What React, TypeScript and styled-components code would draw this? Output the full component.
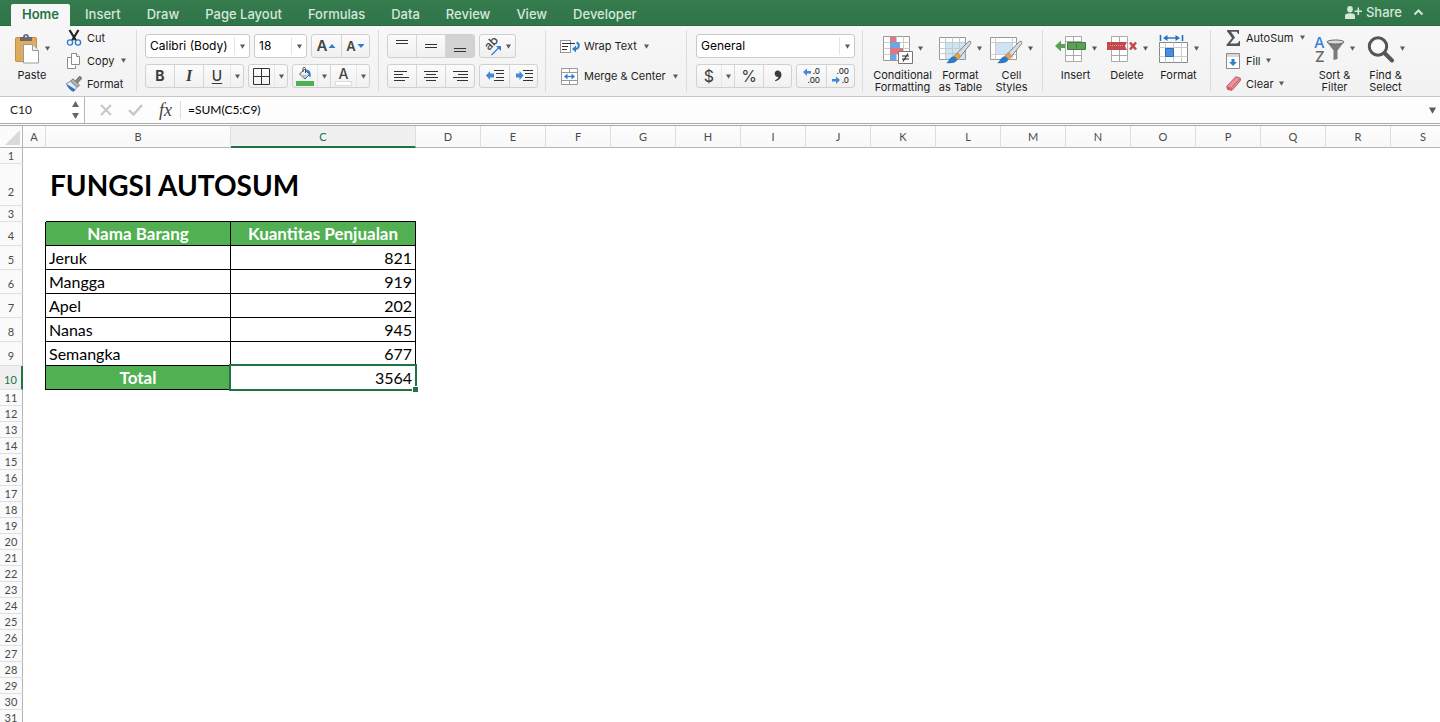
import React from "react";
import styled, { createGlobalStyle, css } from "styled-components";

const UI = `Inter, "Liberation Sans", sans-serif`;
const SHEET = `Lato, "Open Sans", sans-serif`;
const GREEN = "#217346";
const INK = "#1d1d1d";
const BLUE = "#2f7fd1";

const GlobalStyle = createGlobalStyle`
  *, *::before, *::after { box-sizing: border-box; }
  body { margin: 0; background: #fff; font-family: ${UI}; color: ${INK}; }
  button, input, select { font: inherit; color: inherit; margin: 0; padding: 0; border: 0; background: none; outline: none; }
  svg { display: block; flex: none; overflow: visible; }
`;

const Window = styled.div`
  display: flex;
  flex-direction: column;
  height: 100vh;
  overflow: hidden;
`;

/* ---------- tab strip ---------- */

const TitleBar = styled.header`
  display: flex;
  align-items: flex-end;
  justify-content: space-between;
  flex: none;
  height: 26px;
  padding: 0 16px 0 11px;
  background: linear-gradient(#347b4e, #307549);
  border-bottom: 1px solid #2a6a41;
`;

const Tabs = styled.nav`
  display: flex;
  gap: 4px;
  margin-bottom: -1px;
`;

const Tab = styled.button<{ $active?: boolean }>`
  height: 22px;
  padding: 0 11px 2px;
  border-radius: 2px 2px 0 0;
  font-size: 13px;
  line-height: 20px;
  font-weight: ${(p) => (p.$active ? 600 : 500)};
  color: ${(p) => (p.$active ? GREEN : "#d3e8da")};
  background: ${(p) => (p.$active ? "#f6f6f6" : "transparent")};
  white-space: nowrap;
`;

const ShareArea = styled.div`
  display: flex;
  align-items: center;
  gap: 11px;
  height: 26px;
  color: #d3e8da;
`;

const ShareButton = styled.button`
  display: flex;
  align-items: center;
  gap: 4px;
  font-size: 13px;
  line-height: 24px;
  font-weight: 500;
`;

const IconButton = styled.button`
  display: grid;
  place-items: center;
`;

/* ---------- ribbon ---------- */

const Ribbon = styled.div`
  display: flex;
  flex: none;
  height: 71px;
  background: linear-gradient(#f7f7f7, #f2f2f2);
  border-bottom: 1px solid #c6c6c6;
  overflow: hidden;
`;

const Group = styled.section<{ $left?: number; $right?: number }>`
  display: flex;
  flex: none;
  padding: 0 ${(p) => p.$right ?? 8}px 0 ${(p) => p.$left ?? 8}px;
  position: relative;
  &:not(:last-child)::after {
    content: "";
    position: absolute;
    right: 0;
    top: 4px;
    bottom: 4px;
    width: 1px;
    background: #dcdcdc;
  }
`;

const TwoRows = styled.div<{ $width?: number }>`
  display: flex;
  flex-direction: column;
  gap: 6px;
  padding-top: 8px;
  width: ${(p) => (p.$width ? `${p.$width}px` : "auto")};
`;

const ControlRow = styled.div`
  display: flex;
  gap: 4px;
`;

const ThreeRows = styled.div<{ $width: number; $left?: number }>`
  display: flex;
  flex-direction: column;
  align-items: flex-start;
  padding-left: ${(p) => p.$left ?? 0}px;
  width: ${(p) => p.$width}px;
`;

const RowButton = styled.button<{ $tall?: boolean }>`
  display: flex;
  align-items: center;
  gap: ${(p) => (p.$tall ? 4 : 5)}px;
  height: ${(p) => (p.$tall ? 24 : 23)}px;
  font-size: 11px;
  line-height: 14px;
  white-space: nowrap;
`;

const ArrowSlot = styled.span<{ $gap: number }>`
  padding-left: ${(p) => p.$gap}px;
`;

const BigButton = styled.button<{ $width: number }>`
  display: flex;
  flex-direction: column;
  align-items: center;
  justify-content: flex-start;
  width: ${(p) => p.$width}px;
  padding-top: 7px;
  font-size: 11px;
  line-height: 12px;
  white-space: pre-line;
  text-align: center;
`;

const BigIcon = styled.span`
  display: flex;
  align-items: flex-end;
  gap: 5px;
  height: 31px;
  margin-bottom: 5px;
  > svg:last-child { align-self: center; }
`;

const Segments = styled.div`
  display: flex;
  height: 24px;
  border: 1px solid #d0d0d0;
  border-radius: 3px;
  background: linear-gradient(#fbfbfb, #f0f0f0);
`;

const Segment = styled.button<{ $w: number; $pressed?: boolean; $plain?: boolean }>`
  display: flex;
  align-items: center;
  justify-content: center;
  gap: 4px;
  width: ${(p) => p.$w}px;
  font-size: 16px;
  line-height: 20px;
  color: #3c3c3c;
  border-left: 1px solid ${(p) => (p.$plain ? "#e6e6e6" : "#d6d6d6")};
  &:first-child { border-left: 0; }
  ${(p) =>
    p.$pressed &&
    css`
      background: #d2d2d2;
      border-radius: 0 2px 2px 0;
    `}
`;

const Combo = styled.label<{ $w: number }>`
  display: flex;
  align-items: center;
  width: ${(p) => p.$w}px;
  height: 24px;
  border: 1px solid #c9c9c9;
  border-radius: 3px;
  background: #fff;
`;

const ComboSelect = styled.select`
  flex: 1;
  min-width: 0;
  height: 20px;
  padding-left: 4px;
  appearance: none;
  font-size: 12px;
  line-height: 20px;
  color: #000;
`;

const ComboArrow = styled.span`
  display: grid;
  place-items: center;
  width: 15px;
  height: 18px;
  border-left: 1px solid #e4e4e4;
`;

const SizeLabel = styled.span<{ $up?: boolean }>`
  display: flex;
  align-items: center;
  gap: 1px;
  font-size: ${(p) => (p.$up ? 15 : 13)}px;
  line-height: 20px;
  font-weight: 600;
  color: #444;
`;

const ColorLabel = styled.span`
  display: flex;
  flex-direction: column;
  align-items: center;
  font-size: 14px;
  line-height: 15px;
  font-weight: 500;
  color: #444;
  &::after {
    content: "";
    width: 17px;
    height: 5px;
    background: #fff;
    border: 1px solid #ddd;
  }
`;

const Bold = styled.b`
  font-weight: 700;
  font-size: 14px;
`;

const Italic = styled.i`
  font-family: "Liberation Serif", serif;
  font-weight: 700;
  font-size: 16px;
`;

const Underlined = styled.span`
  font-size: 14px;
  font-weight: 500;
  text-decoration: underline;
  text-underline-offset: 2px;
`;

/* ---------- formula bar ---------- */

const FormulaBar = styled.div`
  display: flex;
  align-items: stretch;
  flex: none;
  height: 27px;
  background: #fdfdfd;
  border-bottom: 1px solid #a9a9a9;
`;

const NameBox = styled.div`
  display: flex;
  align-items: center;
  width: 85px;
  padding: 0 4px 0 10px;
  border-right: 1px solid #b5b5b5;
  background: #fff;
`;

const NameInput = styled.input`
  flex: 1;
  min-width: 0;
  font-family: ${SHEET};
  font-size: 12px;
  line-height: 16px;
`;

const FormulaTools = styled.div`
  display: flex;
  align-items: center;
  gap: 16px;
  width: 96px;
  margin: 4px 0;
  padding-left: 15px;
  border-right: 1px solid #dcdcdc;
`;

const FxButton = styled.button`
  font-family: "Liberation Serif", serif;
  font-style: italic;
  font-size: 18px;
  line-height: 18px;
  color: #444;
`;

const FormulaInput = styled.input`
  flex: 1;
  min-width: 0;
  padding-left: 7px;
  font-family: ${SHEET};
  font-size: 12px;
  line-height: 16px;
  color: #000;
`;

const ExpandButton = styled(IconButton)`
  width: 16px;
`;

/* ---------- sheet ---------- */

const SheetArea = styled.main`
  flex: 1;
  min-height: 0;
  overflow: hidden;
  margin-top: 1px;
  border-top: 1px solid #a9a9a9;
  background: #fff;
`;

const Grid = styled.table`
  table-layout: fixed;
  width: 0;
  border-collapse: separate;
  border-spacing: 0;
  font-family: ${SHEET};
`;

const Col = styled.col<{ $w: number }>`
  width: ${(p) => p.$w}px;
`;

const Corner = styled.td`
  height: 22px;
  padding: 0 2px 2px 0;
  border-right: 1px solid #b5b5b5;
  border-bottom: 1px solid #b5b5b5;
  background: #fbfbfb;
  vertical-align: bottom;
  svg { margin-left: auto; }
`;

const ColHead = styled.th<{ $on?: boolean }>`
  height: 22px;
  padding: ${(p) => (p.$on ? 1 : 0)}px 0 0;
  font-size: 11px;
  line-height: 14px;
  font-weight: 400;
  color: ${(p) => (p.$on ? GREEN : "#4a4a4a")};
  background: ${(p) => (p.$on ? "#f0f0f0" : "linear-gradient(#fdfdfd, #f8f8f8)")};
  border-right: 1px solid #dedede;
  border-bottom: ${(p) => (p.$on ? `2px solid ${GREEN}` : "1px solid #b5b5b5")};
`;

const Row = styled.tr<{ $h: number }>`
  height: ${(p) => p.$h}px;
`;

const RowHead = styled.th<{ $on?: boolean; $lift: number }>`
  padding: 0 0 ${(p) => p.$lift}px;
  font-size: 11px;
  line-height: 14px;
  font-weight: 400;
  vertical-align: bottom;
  color: ${(p) => (p.$on ? GREEN : "#4a4a4a")};
  background: ${(p) => (p.$on ? "#f0f0f0" : "#fafafa")};
  border-bottom: 1px solid #e0e0e0;
  border-right: ${(p) => (p.$on ? `2px solid ${GREEN}` : "1px solid #b5b5b5")};
`;

const Blank = styled.td`
  padding: 0;
`;

const LeadCell = styled(Blank)<{ $ruled?: boolean; $under?: boolean }>`
  border-right: ${(p) => (p.$ruled ? "1px solid #000" : "0")};
  border-bottom: ${(p) => (p.$under ? "1px solid #000" : "0")};
`;

const Title = styled.td`
  padding: 0 0 4px 4px;
  font-size: 28px;
  line-height: 34px;
  font-weight: 700;
  color: #000;
  vertical-align: bottom;
  white-space: nowrap;
`;

const Cell = styled.td<{ $fill?: boolean; $num?: boolean }>`
  position: relative;
  height: 24px;
  padding: 0 3px;
  font-size: ${(p) => (p.$fill ? 17 : 16)}px;
  line-height: 22px;
  color: ${(p) => (p.$fill ? "#fff" : "#000")};
  font-weight: ${(p) => (p.$fill ? 700 : 400)};
  text-align: ${(p) => (p.$fill ? "center" : p.$num ? "right" : "left")};
  background: ${(p) => (p.$fill ? "#50b052" : "#fff")};
  border-right: 1px solid #000;
  border-bottom: 1px solid #000;
`;

const Selection = styled.span`
  position: absolute;
  inset: -2px;
  border: 2px solid ${GREEN};
  &::after {
    content: "";
    position: absolute;
    right: -3px;
    bottom: -3px;
    width: 6px;
    height: 6px;
    background: ${GREEN};
    border: solid #fff;
    border-width: 1px 0 0 1px;
  }
`;

/* ---------- icons ---------- */

const Down = ({ s = 5, c = "#5a5a5a" }: { s?: number; c?: string }) => (
  <svg width={s} height={s} viewBox="0 0 5 5" aria-hidden="true">
    <path d="M0 .4h5L2.5 4.8z" fill={c} />
  </svg>
);

const PasteIcon = () => (
  <svg width="25" height="30" viewBox="0 0 25 30" aria-hidden="true">
    <rect x=".5" y="3.500" width="21" height="24" rx="1" fill="#e0aa5f" stroke="#c18f48" />
    <path d="M5 3h3c0-4 6-4 6 0h3v4H5z" fill="#6a6a6a" />
    <circle cx="11" cy="2.600" r="1" fill="#e8e8e8" />
    <path d="M8.500 10.500h9l6 6v12.500h-15z" fill="#fff" stroke="#9a9a9a" />
    <path d="M17.500 10.500v6h6" fill="#eee" stroke="#9a9a9a" />
  </svg>
);
const CutIcon = () => (
  <svg width="16" height="16" viewBox="0 0 16 16" aria-hidden="true">
    <path d="M3.500 0 10 10.500M12.500 0 6 10.500" stroke="#222" strokeWidth="2.200" fill="none" />
    <circle cx="4" cy="12.500" r="2.600" fill="none" stroke={BLUE} strokeWidth="1.400" />
    <circle cx="12" cy="12.500" r="2.600" fill="none" stroke={BLUE} strokeWidth="1.400" />
  </svg>
);
const CopyIcon = () => (
  <svg width="16" height="16" viewBox="0 0 16 16" fill="#fff" stroke="#8d8d8d" aria-hidden="true">
    <path d="M5.500 4.500h-4v11h8v-3" />
    <path d="M5.500.5h5l3 3v8h-8z" />
    <path d="M10.500.5v3h3" />
  </svg>
);
const BrushIcon = () => (
  <svg width="16" height="16" viewBox="0 0 16 16" aria-hidden="true">
    <path d="M9.500 5 13 .8c1.200-.8 3 .8 2.200 2.200L11.500 7z" fill="#8c8c8c" stroke="#555" strokeWidth=".8" />
    <path d="M7 2.800 13.500 9 11 11.500 4.500 5.200z" fill="#b4b4b4" stroke="#666" strokeWidth=".8" />
    <path d="M4.500 5.200 11 11.500 7.500 15.500C4.500 14 2 11.500.3 7.500z" fill="#e4edf6" stroke="#777" strokeWidth=".8" />
    <path d="M.5 8c2.500 1.500 6 3 8.800 5.800L7.500 15.500C4.500 14.500 2 12 .5 8z" fill="#2d74c4" />
  </svg>
);
const BordersIcon = () => (
  <svg width="17" height="17" viewBox="0 0 17 17" aria-hidden="true">
    <path d="M.5.5h16v16H.5zM8.500.5v16M.5 8.500h16" fill="none" stroke="#333" />
  </svg>
);
const FillIcon = () => (
  <svg width="18" height="19" viewBox="0 0 18 19" aria-hidden="true">
    <path d="m3.500 7 5-4.500 5 5-4.500 4.500z" fill="#f4f4f4" stroke="#555" />
    <path d="M7 5V1.500c0-1.500 2.500-1.500 2.500 0V6" fill="none" stroke="#444" />
    <path d="M9.500 2.500c4 0 6 2.500 5 8-2-1-2-3-3-5.500z" fill={BLUE} />
    <path d="m4 7.500 8 .2-3.200 3.500z" fill="#a9c9ea" />
    <rect y="14" width="18" height="5" fill="#4fb052" />
  </svg>
);
const SizeArrow = ({ up }: { up?: boolean }) => (
  <svg width="8" height="4" viewBox="0 0 8 4" aria-hidden="true">
    <path d={up ? "M.5 4h7L4 0z" : "M.5 0h7L4 4z"} fill={BLUE} />
  </svg>
);
const Lines = ({ d }: { d: string }) => (
  <svg width="16" height="14" viewBox="0 0 16 14" aria-hidden="true">
    <path d={d} stroke="#333" fill="none" />
  </svg>
);
const OrientIcon = () => (
  <svg width="18" height="19" viewBox="0 0 18 19" aria-hidden="true">
    <text x="5" y="14" fontSize="12" fontWeight="500" fill="#444" fontFamily={UI} transform="rotate(-45 5 14)">ab</text>
    <path d="m7.500 18 8-8" stroke={BLUE} strokeWidth="1.300" />
    <path d="M12 9h5v5z" fill={BLUE} />
  </svg>
);
const IndentIcon = ({ inc }: { inc?: boolean }) => (
  <svg width="18" height="12" viewBox="0 0 18 12" aria-hidden="true">
    <path d="M8 .5h10M10 3.500h8M10 7.500h8M8 10.500h10" stroke="#333" />
    <path d={inc ? "M8.500 5.500 4.500 1v2.500H1v4h3.500V10z" : "M0 5.500 4 1v2.500h4v4H4V10z"} fill="#3f8ad8" />
  </svg>
);
const WrapIcon = () => (
  <svg width="20" height="14" viewBox="0 0 20 14" aria-hidden="true">
    <rect x=".5" y="1.500" width="10" height="12" fill="#fff" stroke="#999" />
    <path d="M2 4.500h13M2 7.500h6M2 10.500h5" stroke="#333" />
    <path d="M16.500 3.500c3.500 1 3 6.500-1.500 6.500" fill="none" stroke={BLUE} strokeWidth="2" />
    <path d="M16 6.500v7L12 10z" fill={BLUE} />
  </svg>
);
const MergeIcon = () => (
  <svg width="20" height="17" viewBox="0 0 20 17" aria-hidden="true">
    <path d="M1.500.5h16v16h-16zM1.500 4.500h16M1.500 12.500h16M9.500.5v4M9.500 12.500v4" fill="#fff" stroke="#999" />
    <path d="M6 8.500h7" stroke={BLUE} strokeWidth="1.200" />
    <path d="M4 8.500 7.500 5.500v6zM15 8.500 11.500 5.500v6z" fill={BLUE} />
  </svg>
);
const CommaIcon = () => (
  <svg width="8" height="12" viewBox="0 0 8 12" aria-hidden="true">
    <path d="M3.300.5C6 .5 7.500 2.300 7.500 4.800c0 3-2.500 5.500-6 6.400L1 10.300c2-.8 3.200-2 3.500-3.500C2.500 7.300.7 6 .7 3.700.7 1.800 1.800.5 3.300.5z" fill="#3c3c3c" />
  </svg>
);
const DecimalIcon = ({ dec }: { dec?: boolean }) => (
  <svg width="20" height="16" viewBox="0 0 20 16" aria-hidden="true">
    <g fontSize="8" fontWeight="500" fill="#333" fontFamily={UI} textAnchor="end">
      <text x="18" y="6">{dec ? ".00" : ".0"}</text>
      <text x="18" y="15">{dec ? ".0" : ".00"}</text>
    </g>
    <path d={dec ? "M9 12 5 8.500V11H1v2.500h4V16z" : "M1 4l4-3.500V3h4v2.500H5V8z"} fill="#3f8ad8" />
  </svg>
);
const PaintBrush = () => (
  <g>
    <path d="M31.500 5.500c.8.800.3 2-.5 3L21 21l-3.500-3L28 7c1-1 2.700-2.300 3.500-1.500z" fill="#dcdcdc" stroke="#777" strokeWidth=".9" />
    <path d="M17 17.500c2-1 5 1.500 4 4l-3 2.500-4-3z" fill="#dba55a" stroke="#b98238" strokeWidth=".7" />
    <path d="M14 20.500c2-.5 4.500 1.500 4 4-2 3-7 3-11 2.500 3-1 3-5.500 7-6.500z" fill="#3079c6" />
  </g>
);
const CondIcon = () => (
  <svg width="30" height="28" viewBox="0 0 30 28" aria-hidden="true">
    <path d="M.5.500h26v24H.5z" fill="#fff" stroke="#999" />
    <path d="M.5 6.500h26M.5 12.500h26M.5 18.500h26M20.500.5v24M13.500.5v24" stroke="#ccc" />
    <path d="M7 1h6v5H7zM7 12h13v6H7z" fill="#e07880" />
    <path d="M7 6h10v6H7zM7 18h6v6H7z" fill="#6fa6e2" />
    <path d="M15.500 15.500h14v12h-14z" fill="#fff" stroke="#777" />
    <path d="M19 20h7M19 23h7M25 17.500l-5 8" stroke="#222" strokeWidth="1.100" />
  </svg>
);
const TableIcon = () => (
  <svg width="33" height="28" viewBox="0 0 33 28" aria-hidden="true">
    <path d="M.5 1.500h26v22H.5z" fill="#fff" stroke="#999" />
    <path d="M7 7h19v16H7z" fill="#cfe3f6" />
    <path d="M.5 6.500h26M.5 12.500h26M.5 17.500h26M6.500 1.500v22M13.500 1.500v22M20.500 1.500v22" stroke="#bfcfc8" />
    <PaintBrush />
  </svg>
);
const StylesIcon = () => (
  <svg width="33" height="28" viewBox="0 0 33 28" aria-hidden="true">
    <path d="M.5 1.500h26v22H.5z" fill="#fff" stroke="#999" />
    <path d="M.5 6.500h26M.5 18.500h26M5.500 1.500v22M22.500 1.500v22" stroke="#ccc" />
    <path d="M6 7h16v11H6z" fill="#cfe3f6" />
    <PaintBrush />
  </svg>
);
const InsertIcon = () => (
  <svg width="32" height="28" viewBox="0 0 32 28" aria-hidden="true">
    <path d="M10.500.5h16v25h-16zM10.500 19.500h16M18.500.5v25M10.500 5.500h16" fill="#fff" stroke="#aaa" />
    <path d="M12.500 6.500h18v7h-18z" fill="#5c9f56" stroke="#3f7d3b" />
    <path d="M21.500 8v4" stroke="#3f7d3b" />
    <path d="M0 10 6 4.500V8h4v4H6v3.500z" fill="#5c9f56" />
  </svg>
);
const DeleteIcon = () => (
  <svg width="31" height="28" viewBox="0 0 31 28" aria-hidden="true">
    <path d="M4.500.5h16v25h-16zM4.500 19.500h16M12.500.5v25" fill="#fff" stroke="#aaa" />
    <path d="M0 6h20l-2 4 2 4H0z" fill="#c4494f" />
    <path d="M3 9.500h14" stroke="#e79a9d" strokeDasharray="1 1" />
    <path d="m23 6.500 6 7M29 6.500l-6 7" stroke="#c4494f" strokeWidth="2.600" />
  </svg>
);
const FormatIcon = () => (
  <svg width="30" height="29" viewBox="0 0 30 29" aria-hidden="true">
    <path d="M1.500 0v6M23.500 0v6" stroke="#2471bd" strokeWidth="1.600" />
    <path d="M7 3h11" stroke="#2471bd" strokeWidth="1.400" />
    <path d="M4 3 8.500 0v6zM21 3l-4.500-3v6z" fill="#2471bd" />
    <path d="M.5 7.500h28v20H.5z" fill="#fff" stroke="#888" />
    <path d="M.5 12.500h28M.5 21.500h28M6.500 7.500v20M14.500 7.500v20M22.500 7.500v20" stroke="#ccc" />
    <path d="M6.500 13.500h8v8h-8z" fill="#4a90dc" stroke="#2a6db8" />
  </svg>
);
const SigmaIcon = () => (
  <svg width="15" height="16" viewBox="0 0 15 16" aria-hidden="true">
    <path d="M1 0h12v4h-1c-.4-1.700-1-2.300-2.500-2.300H5L9 7.500l-5 6h6c1.700 0 2.400-.7 3-2.500h1V16H.5v-1.200L6 8 1 1.200z" fill="#555" />
  </svg>
);
const FillDownIcon = () => (
  <svg width="15" height="16" viewBox="0 0 15 16" aria-hidden="true">
    <path d="M.5.500h13v15H.5z" fill="#fff" stroke="#8a8a8a" />
    <path d="M1 1h12v3H1z" fill="#d8d8d8" />
    <path d="M5.500 6h3v3H11l-4 4-4-4h2.500z" fill="#2f7fd1" />
  </svg>
);
const EraserIcon = () => (
  <svg width="15" height="15" viewBox="0 0 15 15" aria-hidden="true">
    <path d="m.7 10.500 9-9.800 4.600 1.500v2.500L6 14.300l-4.500-.8z" fill="#e9929b" stroke="#b34a55" strokeWidth=".9" />
    <path d="m1 10.300 4.800 1.400L6 14.300l-4.500-.8z" fill="#d0606c" />
    <path d="m5.800 11.500 8.400-9" stroke="#b34a55" strokeWidth=".7" />
  </svg>
);
const SortIcon = () => (
  <svg width="31" height="28" viewBox="0 0 31 28" aria-hidden="true">
    <g fontSize="15" fontFamily={UI} fontWeight="500">
      <text x="0" y="12" fill="#3483dc">A</text>
      <text x="1" y="26" fill="#666">Z</text>
    </g>
    <path d="M13 6h17l-6.500 8.500V23L19.500 24v-9.500z" fill="#7b7b7b" />
    <ellipse cx="21.500" cy="6" rx="8.500" ry="2" fill="#ddd" stroke="#666" />
  </svg>
);
const FindIcon = () => (
  <svg width="28" height="28" viewBox="0 0 28 28" aria-hidden="true">
    <circle cx="11" cy="10.500" r="8.700" fill="#fafafa" stroke="#555" strokeWidth="3" />
    <path d="m17.500 17 7.500 7.500" stroke="#555" strokeWidth="4" strokeLinecap="round" />
  </svg>
);
const PersonIcon = () => (
  <svg width="17" height="13" viewBox="0 0 17 13" fill="currentColor" aria-hidden="true">
    <ellipse cx="5" cy="3.300" rx="2.800" ry="3.200" />
    <path d="M0 13V9.500C0 8 2 7.300 5 7.300s5 .7 5 2.200V13z" />
    <path d="M12.500 1.500h1.600v3h2.900v1.600h-2.900v3h-1.600v-3H9.600V4.500h2.900z" />
  </svg>
);

/* ---------- building blocks ---------- */

const Picker = ({ w, label, value }: { w: number; label: string; value: string }) => (
  <Combo $w={w}>
    <ComboSelect aria-label={label} defaultValue={value}>
      <option>{value}</option>
    </ComboSelect>
    <ComboArrow><Down /></ComboArrow>
  </Combo>
);

const Big = ({ w, icon, label }: { w: number; icon: React.ReactNode; label: string }) => (
  <BigButton $width={w}>
    <BigIcon>{icon}<Down /></BigIcon>
    {label}
  </BigButton>
);

const Item = ({ icon, label, arrow, tall }: { icon: React.ReactNode; label: string; arrow?: number; tall?: boolean }) => (
  <RowButton $tall={tall}>
    {icon}
    {label}
    {arrow !== undefined && <ArrowSlot $gap={arrow}><Down /></ArrowSlot>}
  </RowButton>
);

/* ---------- data ---------- */

const TABS = ["Home", "Insert", "Draw", "Page Layout", "Formulas", "Data", "Review", "View", "Developer"];
const COLUMNS = "ABCDEFGHIJKLMNOPQRS".split("");
const colWidth = (c: string) => (c === "A" ? 23 : c === "B" || c === "C" ? 185 : 65);
const ITEMS: Record<number, [string, number]> = {
  5: ["Jeruk", 821],
  6: ["Mangga", 919],
  7: ["Apel", 202],
  8: ["Nanas", 945],
  9: ["Semangka", 677],
};
const TOTAL = Object.values(ITEMS).reduce((sum, [, n]) => sum + n, 0);
const rowHeight = (r: number) => (r === 2 ? 42 : r >= 4 && r <= 10 ? 24 : 16);
const labelLift = (h: number) => (h === 42 ? 6 : h === 24 ? 2 : 0);
const ROWS = Array.from({ length: 31 }, (_, i) => i + 1);

const rowCells = (r: number) => {
  if (r === 2) return <><Blank /><Title colSpan={18}>FUNGSI AUTOSUM</Title></>;
  if (r === 3) return <><Blank /><LeadCell $under /><LeadCell $under /></>;
  if (r === 4)
    return <><LeadCell $ruled /><Cell $fill>Nama Barang</Cell><Cell $fill>Kuantitas Penjualan</Cell></>;
  if (ITEMS[r])
    return <><LeadCell $ruled /><Cell>{ITEMS[r][0]}</Cell><Cell $num>{ITEMS[r][1]}</Cell></>;
  if (r === 10)
    return <><LeadCell $ruled /><Cell $fill>Total</Cell><Cell $num>{TOTAL}<Selection /></Cell></>;
  return <Blank colSpan={19} />;
};

export default function App() {
  return (
    <Window>
      <GlobalStyle />
      <TitleBar>
        <Tabs>
          {TABS.map((t, i) => <Tab key={t} $active={i === 0}>{t}</Tab>)}
        </Tabs>
        <ShareArea>
          <ShareButton><PersonIcon />Share</ShareButton>
          <IconButton aria-label="Collapse ribbon">
            <svg width="11" height="7" viewBox="0 0 11 7" aria-hidden="true">
              <path d="m1.500 5.500 4-4 4 4" fill="none" stroke="currentColor" strokeWidth="2" />
            </svg>
          </IconButton>
        </ShareArea>
      </TitleBar>

      <Ribbon>
        <Group $right={0}>
          <Big w={48} icon={<PasteIcon />} label="Paste" />
          <ThreeRows $width={81} $left={10}>
            <Item icon={<CutIcon />} label="Cut" />
            <Item icon={<CopyIcon />} label="Copy" arrow={2} />
            <Item icon={<BrushIcon />} label="Format" />
          </ThreeRows>
        </Group>

        <Group $right={9}>
          <TwoRows>
            <ControlRow>
              <Picker w={105} label="Font" value="Calibri (Body)" />
              <Picker w={53} label="Font size" value="18" />
              <Segments>
                <Segment $w={29} aria-label="Increase font size"><SizeLabel $up>A<SizeArrow up /></SizeLabel></Segment>
                <Segment $w={28} aria-label="Decrease font size"><SizeLabel>A<SizeArrow /></SizeLabel></Segment>
              </Segments>
            </ControlRow>
            <ControlRow>
              <Segments>
                <Segment $w={28}><Bold>B</Bold></Segment>
                <Segment $w={29}><Italic>I</Italic></Segment>
                <Segment $w={27}><Underlined>U</Underlined></Segment>
                <Segment $w={13} $plain aria-label="Underline options"><Down /></Segment>
              </Segments>
              <Segments>
                <Segment $w={25} aria-label="Borders"><BordersIcon /></Segment>
                <Segment $w={13} $plain aria-label="Border options"><Down /></Segment>
              </Segments>
              <Segments>
                <Segment $w={24} aria-label="Fill colour"><FillIcon /></Segment>
                <Segment $w={13} $plain aria-label="Fill colour options"><Down /></Segment>
                <Segment $w={26} aria-label="Font colour"><ColorLabel>A</ColorLabel></Segment>
                <Segment $w={13} $plain aria-label="Font colour options"><Down /></Segment>
              </Segments>
            </ControlRow>
          </TwoRows>
        </Group>

        <Group>
          <TwoRows>
            <ControlRow>
              <Segments>
                <Segment $w={28} aria-label="Align top"><Lines d="M2 1.500h12M2 4.500h12" /></Segment>
                <Segment $w={29} aria-label="Align middle"><Lines d="M2 5.500h12M2 8.500h12" /></Segment>
                <Segment $w={29} $pressed aria-label="Align bottom"><Lines d="M2 9.500h12M2 12.500h12" /></Segment>
              </Segments>
              <Segments>
                <Segment $w={35} aria-label="Orientation"><OrientIcon /><Down /></Segment>
              </Segments>
            </ControlRow>
            <ControlRow>
              <Segments>
                <Segment $w={28} aria-label="Align left"><Lines d="M0 2.500h13M0 5.500h9M0 8.500h15M0 11.500h11" /></Segment>
                <Segment $w={29} aria-label="Centre"><Lines d="M1 2.500h14M3 5.500h10M1 8.500h14M3 11.500h10" /></Segment>
                <Segment $w={29} aria-label="Align right"><Lines d="M1 2.500h15M6 5.500h10M1 8.500h15M5 11.500h11" /></Segment>
              </Segments>
              <Segments>
                <Segment $w={29} aria-label="Decrease indent"><IndentIcon /></Segment>
                <Segment $w={28} aria-label="Increase indent"><IndentIcon inc /></Segment>
              </Segments>
            </ControlRow>
          </TwoRows>
        </Group>

        <Group $left={14}>
          <TwoRows $width={119}>
            <Item tall icon={<WrapIcon />} label="Wrap Text" arrow={3} />
            <Item tall icon={<MergeIcon />} label="Merge & Center" arrow={3} />
          </TwoRows>
        </Group>

        <Group $left={9}>
          <TwoRows>
            <Picker w={159} label="Number format" value="General" />
            <ControlRow>
              <Segments>
                <Segment $w={24} aria-label="Currency">$</Segment>
                <Segment $w={13} $plain aria-label="Currency options"><Down /></Segment>
                <Segment $w={29} aria-label="Percent">%</Segment>
                <Segment $w={28} aria-label="Comma style"><CommaIcon /></Segment>
              </Segments>
              <Segments>
                <Segment $w={29} aria-label="Increase decimals"><DecimalIcon /></Segment>
                <Segment $w={28} aria-label="Decrease decimals"><DecimalIcon dec /></Segment>
              </Segments>
            </ControlRow>
          </TwoRows>
        </Group>

        <Group $left={7} $right={6}>
          <Big w={65} icon={<CondIcon />} label={"Conditional\nFormatting"} />
          <Big w={51} icon={<TableIcon />} label={"Format\nas Table"} />
          <Big w={51} icon={<StylesIcon />} label={"Cell\nStyles"} />
        </Group>

        <Group $left={7} $right={7}>
          <Big w={51} icon={<InsertIcon />} label="Insert" />
          <Big w={52} icon={<DeleteIcon />} label="Delete" />
          <Big w={51} icon={<FormatIcon />} label="Format" />
        </Group>

        <Group $left={15} $right={0}>
          <ThreeRows $width={83}>
            <Item icon={<SigmaIcon />} label="AutoSum" arrow={2} />
            <Item icon={<FillDownIcon />} label="Fill" arrow={0} />
            <Item icon={<EraserIcon />} label="Clear" arrow={0} />
          </ThreeRows>
          <Big w={51} icon={<SortIcon />} label={"Sort &\nFilter"} />
          <Big w={51} icon={<FindIcon />} label={"Find &\nSelect"} />
        </Group>
      </Ribbon>

      <FormulaBar>
        <NameBox>
          <NameInput aria-label="Name box" defaultValue="C10" />
          <svg width="8" height="20" viewBox="0 0 8 20" fill="#666" aria-hidden="true">
            <path d="M0 7h7L3.500 1zM0 13h7l-3.500 6z" />
          </svg>
        </NameBox>
        <FormulaTools>
          <IconButton aria-label="Cancel">
            <svg width="12" height="12" viewBox="0 0 12 12" aria-hidden="true">
              <path d="m1 1 10 10M11 1 1 11" stroke="#c6c6c6" strokeWidth="2" />
            </svg>
          </IconButton>
          <IconButton aria-label="Enter">
            <svg width="15" height="12" viewBox="0 0 15 12" aria-hidden="true">
              <path d="m1 6 4.500 4.500L14 1" fill="none" stroke="#c6c6c6" strokeWidth="2.400" />
            </svg>
          </IconButton>
          <FxButton>fx</FxButton>
        </FormulaTools>
        <FormulaInput aria-label="Formula" defaultValue="=SUM(C5:C9)" />
        <ExpandButton aria-label="Expand formula bar"><Down s={7} /></ExpandButton>
      </FormulaBar>

      <SheetArea>
        <Grid>
          <colgroup>
            <Col $w={23} />
            {COLUMNS.map((c) => <Col key={c} $w={colWidth(c)} />)}
          </colgroup>
          <thead>
            <tr>
              <Corner>
                <svg width="15" height="15" viewBox="0 0 15 15" aria-hidden="true">
                  <path d="M15 0v15H0z" fill="#d9d9d9" />
                </svg>
              </Corner>
              {COLUMNS.map((c) => <ColHead key={c} scope="col" $on={c === "C"}>{c}</ColHead>)}
            </tr>
          </thead>
          <tbody>
            {ROWS.map((r) => (
              <Row key={r} $h={rowHeight(r)}>
                <RowHead scope="row" $on={r === 10} $lift={labelLift(rowHeight(r))}>{r}</RowHead>
                {rowCells(r)}
              </Row>
            ))}
          </tbody>
        </Grid>
      </SheetArea>
    </Window>
  );
}
